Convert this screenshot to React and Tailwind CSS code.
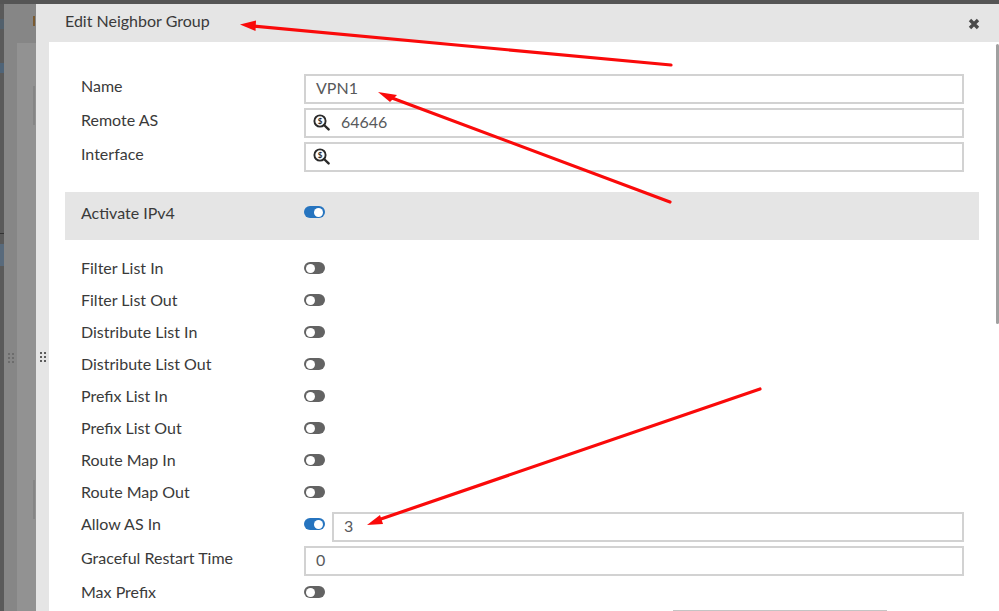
const rows = ["Filter List In","Filter List Out","Distribute List In","Distribute List Out","Prefix List In","Prefix List Out","Route Map In","Route Map Out"];
function Toggle({on}){
  return <span className={`flex items-center shrink-0 w-[21px] h-[12px] rounded-full px-[2px] ${on?"bg-[#2674bf] justify-end":"bg-[#636363] justify-start"}`}>
    <span className="block w-[9px] h-[9px] rounded-full bg-white"/>
  </span>;
}
function Search(){
  return <svg width="17" height="17" viewBox="0 0 17 17" className="shrink-0">
    <circle cx="7" cy="7" r="5.6" fill="none" stroke="#2a2a2a" strokeWidth="1.9"/>
    <path d="M11 11l4.6 4.4" stroke="#2a2a2a" strokeWidth="2.4" strokeLinecap="round"/>
    <text x="7" y="9.8" textAnchor="middle" fontSize="8" fontWeight="700" fill="#2a2a2a" fontFamily="Lato, sans-serif">$</text>
  </svg>;
}
function Field({children,className=""}){
  return <div className={`h-[30px] border-2 border-[#d2d2d2] bg-white flex items-center text-[#58595b] pb-[2px] ${className}`}>{children}</div>;
}
function Row({label,children,h="h-[32px]",lt=""}){
  return <div className={`flex items-center ${h} pl-[32px]`}>
    <div className={`w-[223px] text-[#3a3a3a] ${lt}`}>{label}</div>{children}
  </div>;
}
function Grip({className=""}){
  return <div className={`grid grid-cols-2 gap-[2px] ${className}`}>
    {Array.from({length:6}).map((_,i)=><span key={i} className="block w-[2px] h-[2px] bg-[#5c5c5c]"/>)}
  </div>;
}
export default function App(){
  return <div className="relative w-[999px] h-[611px] overflow-hidden bg-[#8e8e8e] text-[16px] leading-[20px]" style={{fontFamily:"Lato, sans-serif"}}>
    <div className="h-[4px] bg-[#555]"/>
    <div className="flex h-[607px]">
      <div className="relative w-[36px] flex shrink-0">
        <div className="w-[4px] bg-[#5a5a5a] flex flex-col">
          <div className="h-[10px] mt-[15px] bg-[#52606c]"/>
          <div className="h-[10px] mt-[34px] bg-[#4f6478]"/>
          <div className="h-[1px] mt-[160px] bg-[#333]"/>
          <div className="h-[22px] mt-[10px] bg-[#586a7c]"/>
        </div>
        <div className="w-[13px] bg-[#868686] flex flex-col items-center pt-[349px]">
          <Grip className="opacity-60"/>
        </div>
        <div className="flex-1 bg-[#868686] flex flex-col items-end">
          <div className="h-[39px] w-full pt-[12px]"><div className="ml-auto mr-[1px] w-[2px] h-[10px] bg-[#7a5a30]"/></div>
          <div className="flex-1 w-full bg-[#929292] flex flex-col items-end">
            <div className="w-[2px] h-[39px] mt-[43px] mr-[1px] bg-[#858585]"/>
            <div className="w-[2px] h-[39px] mt-[355px] mr-[1px] bg-[#858585]"/>
          </div>
        </div>
      </div>
      <div className="flex-1 flex flex-col bg-[#e5e5e5]">
        <div className="h-[38px] shrink-0 flex items-center justify-between pl-[29px] pr-[19px]">
          <span className="text-[#3a3a3a] -mt-[4px]">Edit Neighbor Group</span>
          <svg width="12" height="12" viewBox="0 0 12 12" className="mt-[1px]"><path d="M2 2l8 8M10 2l-8 8" stroke="#4a4a4a" strokeWidth="3.4"/></svg>
        </div>
        <div className="flex-1 flex min-h-0">
          <div className="w-[13px] shrink-0 flex flex-col items-center pt-[310px]">
            <Grip/>
          </div>
          <div className="flex-1 bg-white relative pt-[32px]">
            <div className="flex flex-col gap-[4px]">
              <Row label="Name" h="h-[30px]" lt="-mt-[6px]"><Field className="w-[660px] pl-[10px]">VPN1</Field></Row>
              <Row label="Remote AS" h="h-[30px]" lt="-mt-[6px]"><Field className="w-[660px] pl-[7px] gap-[11px]"><Search/>64646</Field></Row>
              <Row label="Interface" h="h-[30px]" lt="-mt-[6px]"><Field className="w-[660px] pl-[7px]"><Search/></Field></Row>
            </div>
            <div className="mt-[20px] mr-[20px] ml-[16px] h-[48px] bg-[#e5e5e5] flex items-start pl-[16px] pt-[11px]">
              <div className="w-[223px] text-[#3a3a3a]">Activate IPv4</div>
              <div className="mt-[3px]"><Toggle on/></div>
            </div>
            <div className="mt-[12px]">
              {rows.map(l=><Row key={l} label={l}><Toggle/></Row>)}
              <Row label="Allow AS In"><Toggle on/><Field className="w-[632px] ml-[7px] pl-[10px] mt-[6px]">3</Field></Row>
              <div className="pt-[6px]"><Row label="Graceful Restart Time" h="h-[30px]" lt="-mt-[6px]"><Field className="w-[660px] pl-[10px]">0</Field></Row></div>
              <Row label="Max Prefix"><Toggle/></Row>
            </div>
            <div className="absolute right-0 top-[2px] w-[3px] h-[280px] bg-[#a0a0a0] rounded-full"/>
            <div className="absolute left-[624px] bottom-0 w-[214px] h-[1px] bg-[#c4c4c4]"/>
          </div>
        </div>
      </div>
    </div>
    <svg className="absolute inset-0 pointer-events-none" width="999" height="611" viewBox="0 0 999 611">
      <path d="M671 65L252 26" stroke="#fa0a0a" strokeWidth="3.2" strokeLinecap="round" fill="none"/>
      <path d="M240 24.5L256 20.5L255.5 31z" fill="#fa0a0a"/>
      <path d="M670 202L392 98" stroke="#fa0a0a" strokeWidth="3.2" strokeLinecap="round" fill="none"/>
      <path d="M378 92L397 95L390 102z" fill="#fa0a0a"/>
      <path d="M760 389L378 520" stroke="#fa0a0a" strokeWidth="3.2" strokeLinecap="round" fill="none"/>
      <path d="M367 525L380 515L383 524z" fill="#fa0a0a"/>
    </svg>
  </div>;
}
